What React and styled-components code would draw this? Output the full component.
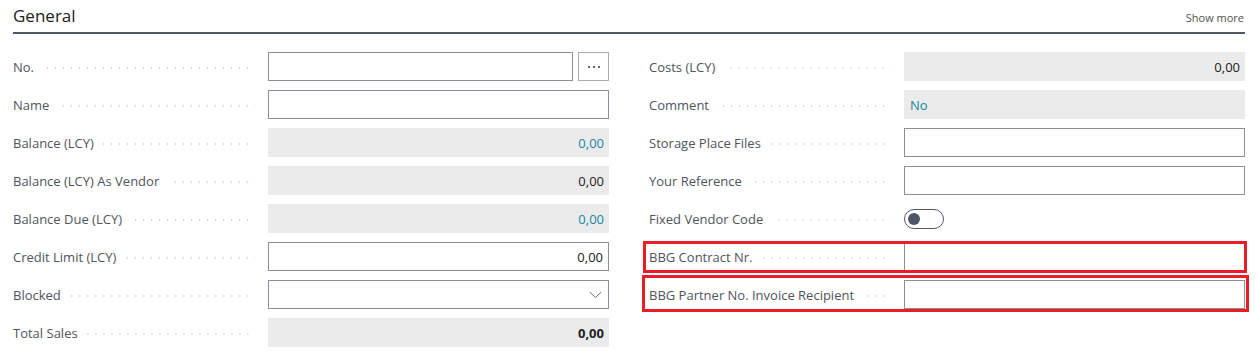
import React from "react";
import styled, { createGlobalStyle } from "styled-components";

const GlobalStyle = createGlobalStyle`
  html, body { margin: 0; padding: 0; background: #ffffff; }
  body { font-family: "Open Sans", "Noto Sans", "Liberation Sans", sans-serif; }
  * { box-sizing: border-box; }
`;

const Page = styled.div`
  width: 1256px;
  height: 361px;
  padding: 0 11px 0 13px;
  overflow: hidden;
`;

const Header = styled.div`
  display: flex;
  align-items: flex-end;
  justify-content: space-between;
  height: 34px;
  padding-bottom: 5px;
  border-bottom: 2px solid #505866;
`;

const Title = styled.h2`
  margin: 0;
  font-size: 17px;
  font-weight: 400;
  color: #212121;
  line-height: 22px;
`;

const ShowMore = styled.button`
  border: none;
  background: none;
  padding: 0 1px 0 0;
  font-family: inherit;
  font-size: 11px;
  color: #505050;
  line-height: 18px;
  cursor: pointer;
`;

const Grid = styled.div`
  display: grid;
  grid-template-columns: 1fr 1fr;
  column-gap: 40px;
  margin-top: 18px;
`;

const Column = styled.div`
  display: flex;
  flex-direction: column;
  gap: 9px;
`;

const Row = styled.div`
  position: relative;
  display: grid;
  grid-template-columns: 255px 1fr;
  align-items: center;
  height: 29px;

  ${({ $mark }) =>
    $mark &&
    `
    &::after {
      content: "";
      position: absolute;
      top: ${$mark[0]}px;
      right: ${$mark[1]}px;
      bottom: ${$mark[2]}px;
      left: ${$mark[3]}px;
      border: 3px solid #ec1c24;
      pointer-events: none;
    }
  `}
`;

const Label = styled.div`
  display: flex;
  align-items: center;
  gap: 9px;
  padding-right: 13px;
  min-width: 0;
`;

const LabelText = styled.span`
  font-size: 13px;
  color: #4f545d;
  white-space: nowrap;
`;

const Leader = styled.span`
  flex: 1;
  height: 2px;
  margin-top: 3px;
  background-image: linear-gradient(to right, #d2d2d2 0 1.5px, transparent 1.5px 100%);
  background-size: 8px 2px;
  background-repeat: repeat-x;
  background-position: right center;
`;

const ControlLine = styled.div`
  display: flex;
  gap: 5px;
  height: 29px;
`;

const Input = styled.div`
  flex: 1;
  height: 29px;
  border: 1px solid #8a909c;
  background: #fff;
  display: flex;
  align-items: center;
  justify-content: ${({ $align }) => ($align === "right" ? "flex-end" : "flex-start")};
  padding: 0 5px;
  font-size: 13px;
  color: #212121;
`;

const ReadOnly = styled.div`
  height: 29px;
  background: #ebebec;
  display: flex;
  align-items: center;
  justify-content: ${({ $align }) => ($align === "left" ? "flex-start" : "flex-end")};
  padding: 0 5px 0 6px;
  font-size: 13px;
  font-weight: ${({ $bold }) => ($bold ? 700 : 400)};
  color: ${({ $link }) => ($link ? "#1a87a3" : "#212121")};
`;

const AssistButton = styled.button`
  width: 31px;
  height: 29px;
  border: 1px solid #a9abae;
  background: #fff;
  padding: 0;
  display: flex;
  align-items: center;
  justify-content: center;
`;

const Select = styled(Input)`
  justify-content: flex-end;
  padding-right: 6px;
`;

const ToggleTrack = styled.div`
  width: 40px;
  height: 20px;
  border: 1px solid #505866;
  border-radius: 10px;
  display: flex;
  align-items: center;
  padding-left: 3px;
`;

const ToggleKnob = styled.span`
  width: 12px;
  height: 12px;
  border-radius: 50%;
  background: #4d5566;
`;

const Field = ({ label, mark, children }) => (
  <Row $mark={mark}>
    <Label>
      <LabelText>{label}</LabelText>
      <Leader />
    </Label>
    {children}
  </Row>
);

const Dots = () => (
  <svg width="14" height="4" viewBox="0 0 14 4">
    <circle cx="2" cy="2" r="1" fill="#333" />
    <circle cx="7" cy="2" r="1" fill="#333" />
    <circle cx="12" cy="2" r="1" fill="#333" />
  </svg>
);

const Chevron = () => (
  <svg width="13" height="8" viewBox="0 0 13 8">
    <path d="M0.8 1 L6.5 6.6 L12.2 1" fill="none" stroke="#6b6f76" strokeWidth="1" />
  </svg>
);

export default function App() {
  return (
    <Page>
      <GlobalStyle />
      <Header>
        <Title>General</Title>
        <ShowMore>Show more</ShowMore>
      </Header>
      <Grid>
        <Column>
          <Field label="No.">
            <ControlLine>
              <Input />
              <AssistButton aria-label="Assist">
                <Dots />
              </AssistButton>
            </ControlLine>
          </Field>
          <Field label="Name">
            <Input />
          </Field>
          <Field label="Balance (LCY)">
            <ReadOnly $link>0,00</ReadOnly>
          </Field>
          <Field label="Balance (LCY) As Vendor">
            <ReadOnly>0,00</ReadOnly>
          </Field>
          <Field label="Balance Due (LCY)">
            <ReadOnly $link>0,00</ReadOnly>
          </Field>
          <Field label="Credit Limit (LCY)">
            <Input $align="right">0,00</Input>
          </Field>
          <Field label="Blocked">
            <Select>
              <Chevron />
            </Select>
          </Field>
          <Field label="Total Sales">
            <ReadOnly $bold>0,00</ReadOnly>
          </Field>
        </Column>
        <Column>
          <Field label="Costs (LCY)">
            <ReadOnly>0,00</ReadOnly>
          </Field>
          <Field label="Comment">
            <ReadOnly $link $align="left">No</ReadOnly>
          </Field>
          <Field label="Storage Place Files">
            <Input />
          </Field>
          <Field label="Your Reference">
            <Input />
          </Field>
          <Field label="Fixed Vendor Code">
            <div>
              <ToggleTrack>
                <ToggleKnob />
              </ToggleTrack>
            </div>
          </Field>
          <Field label="BBG Contract Nr." mark={[-1, -2, -2, -6]}>
            <Input />
          </Field>
          <Field label="BBG Partner No. Invoice Recipient" mark={[-5, -4, -3, -7]}>
            <Input />
          </Field>
        </Column>
      </Grid>
    </Page>
  );
}
